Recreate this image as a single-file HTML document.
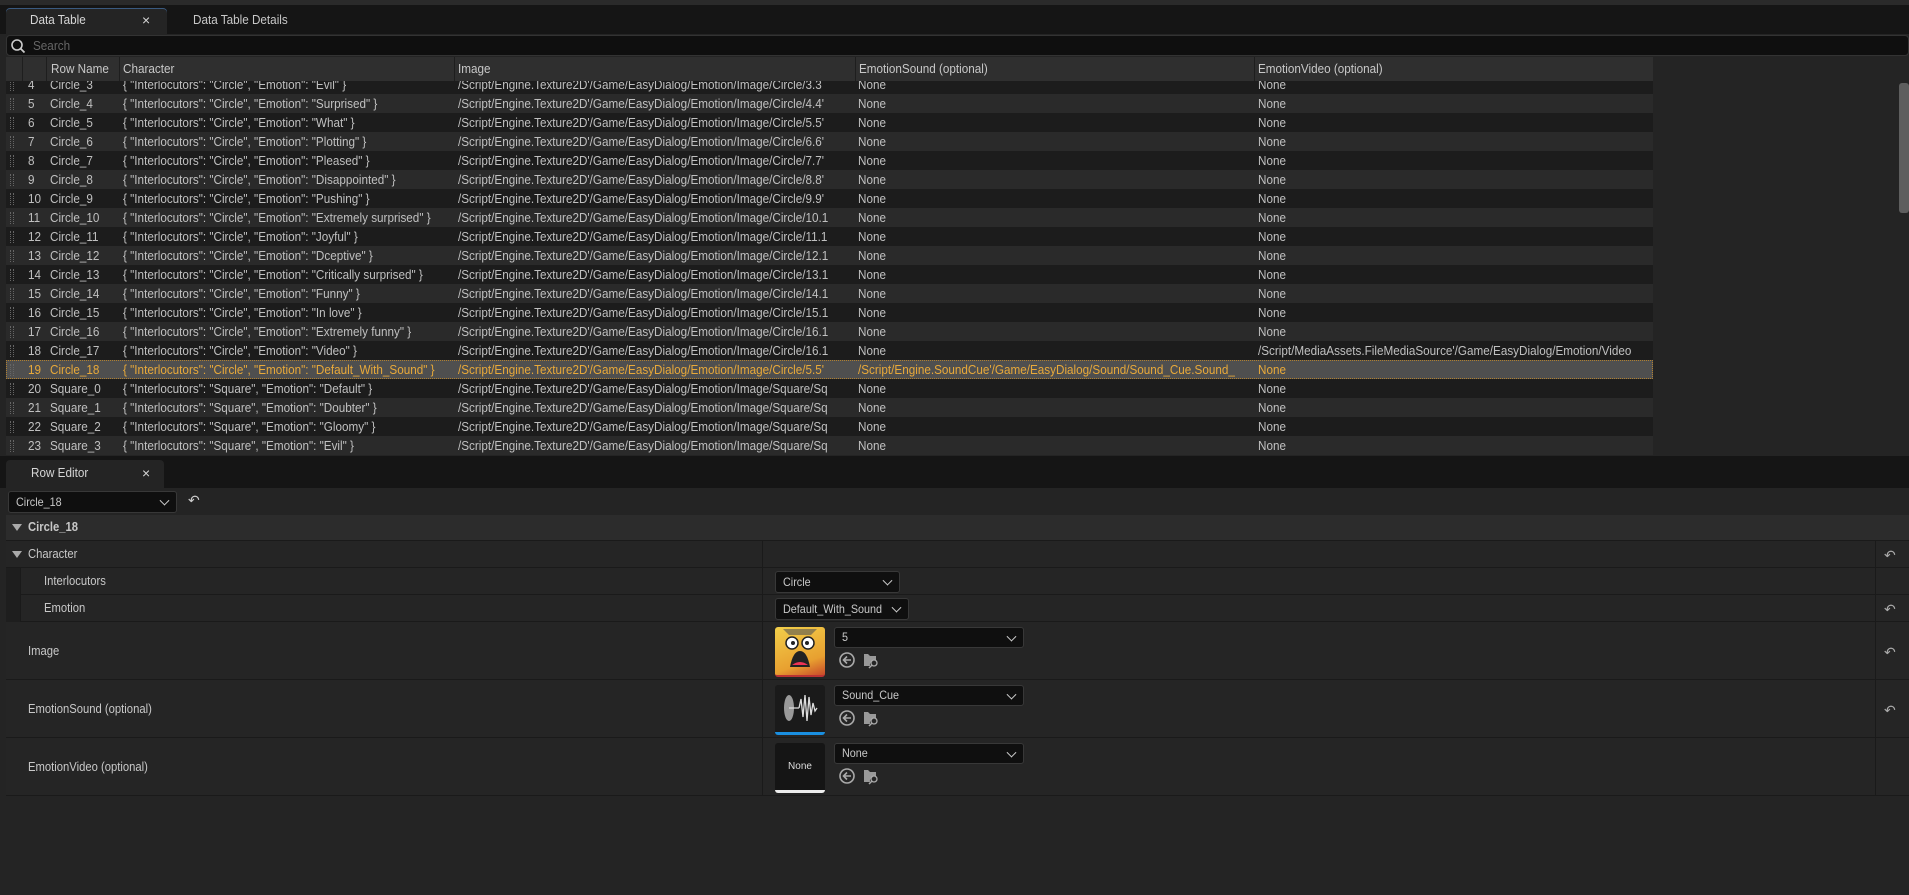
<!DOCTYPE html>
<html><head><meta charset="utf-8"><style>
*{box-sizing:border-box;margin:0;padding:0}
body{width:1909px;height:895px;overflow:hidden;background:#242424;font-family:"Liberation Sans",sans-serif;font-size:13px;color:#c0c0c0;position:relative}
.abs{position:absolute}
.n{display:inline-block;transform:scaleX(.9);transform-origin:0 0;white-space:nowrap}
.tabbar{left:0;top:5px;width:1909px;height:29px;background:#151515}
.tab{top:8px;height:26px;background:#242424;border-radius:4px 4px 0 0;color:#d6d6d6;font-size:13px;line-height:24px}
.search{left:6px;top:35px;width:1903px;height:21px;background:#0f0f0f;border:1px solid #333;border-radius:4px;color:#666;line-height:19px;padding-left:26px}
.hdr{left:6px;top:57px;height:24px;background:#2f2f2f;width:1647px}
.hdr div{position:absolute;top:0;height:24px;line-height:24px;border-left:1px solid #1e1e1e;padding-left:3px;color:#c8c8c8}
.body{left:6px;top:81px;width:1647px;height:375px;overflow:hidden}
.row{position:absolute;left:0;width:1647px;height:19px;line-height:19px;white-space:nowrap}
.row.o{background:#2a2a2a}.row.e{background:#1c1c1c}
.row.sel{background:#4f4f4f;color:#e8a93a;outline:1px dotted #b08030;outline-offset:-1px}
.row span{position:absolute;top:0;overflow:hidden;height:19px;transform:scaleX(.9);transform-origin:0 0}
.row span.grip{transform:none}
.grip{left:4px;top:4px!important;width:4px;height:12px!important;border-left:1px dotted #666;border-right:1px dotted #666}
.lbl{color:#c8c8c8;font-size:12.5px}
.pr{position:absolute;left:6px;width:1903px;border-bottom:1px solid #1a1a1a}
.combo{position:absolute;background:#0f0f0f;border:1px solid #383838;border-radius:3px;color:#c8c8c8;font-size:12px;padding-left:7px;white-space:nowrap}
.chev{position:absolute;right:8px;top:50%;width:7px;height:7px;border-right:1.5px solid #ccc;border-bottom:1.5px solid #ccc;transform:translateY(-70%) rotate(45deg)}
.reset{position:absolute;left:1884px;color:#aaa;font-size:14px}
.thumb{position:absolute;left:775px;width:50px;height:50px;border-radius:3px}
</style></head><body>
<div class="abs" style="left:0;top:0;width:1909px;height:5px;background:#2a2a2a"></div>
<div class="abs tabbar"></div>
<div class="abs tab" style="left:6px;width:161px;box-shadow:inset 0 1px 0 #3a5a80"><span class="n" style="position:absolute;left:24px">Data Table</span><span style="position:absolute;left:136px;font-size:14px">×</span></div>
<div class="abs" style="left:193px;top:8px;line-height:24px;color:#c8c8c8"><span class="n">Data Table Details</span></div>
<div class="abs search"><span class="n">Search</span></div>
<svg class="abs" style="left:10px;top:38px" width="16" height="16"><circle cx="7" cy="7" r="5" fill="none" stroke="#ccc" stroke-width="1.6"/><line x1="10.5" y1="10.5" x2="14.5" y2="14.5" stroke="#ccc" stroke-width="1.8"/></svg>
<div class="abs hdr">
<div style="left:16px;width:24px"></div>
<div style="left:40px;width:73px;padding-left:4px"><span class="n">Row Name</span></div>
<div style="left:113px;width:335px"><span class="n">Character</span></div>
<div style="left:448px;width:401px"><span class="n">Image</span></div>
<div style="left:849px;width:399px"><span class="n">EmotionSound (optional)</span></div>
<div style="left:1248px;width:399px"><span class="n">EmotionVideo (optional)</span></div>
</div>
<div class="abs body" id="tb"></div>
<div class="abs" style="left:1899px;top:83px;width:10px;height:130px;background:#5e5e5e;border-radius:3px"></div>
<div class="abs" style="left:0;top:456px;width:1909px;height:32px;background:#151515"></div>
<div class="abs tab" style="left:6px;top:460px;width:158px;height:28px;line-height:26px"><span class="n" style="position:absolute;left:25px">Row Editor</span><span style="position:absolute;left:136px;font-size:14px">×</span></div>
<div class="abs" style="left:0;top:488px;width:1909px;height:407px;background:#242424"></div>
<div class="combo" style="left:8px;top:491px;width:169px;height:22px;line-height:20px"><span class="n">Circle_18</span><div class="chev"></div></div>
<div class="abs" style="left:188px;top:492px;color:#ccc;font-size:14px">↶</div>
<div class="pr" style="top:515px;height:26px;background:#2c2c2c"></div>
<div class="abs" style="left:12px;top:524px;width:0;height:0;border-left:5px solid transparent;border-right:5px solid transparent;border-top:7px solid #aaa"></div>
<div class="abs lbl" style="left:28px;top:520px;font-weight:bold"><span class="n">Circle_18</span></div>
<div class="pr" style="top:541px;height:27px;background:#252525"></div>
<div class="abs" style="left:12px;top:551px;width:0;height:0;border-left:5px solid transparent;border-right:5px solid transparent;border-top:7px solid #aaa"></div>
<div class="abs lbl" style="left:28px;top:547px"><span class="n">Character</span></div>
<div class="pr" style="top:568px;height:27px;background:#252525"></div>
<div class="pr" style="top:595px;height:27px;background:#252525"></div>
<div class="abs" style="left:6px;top:568px;width:15px;height:54px;background:#1e1e1e;border-right:1px solid #1a1a1a"></div>
<div class="abs lbl" style="left:44px;top:574px"><span class="n">Interlocutors</span></div>
<div class="abs lbl" style="left:44px;top:601px"><span class="n">Emotion</span></div>
<div class="pr" style="top:622px;height:58px;background:#252525"></div>
<div class="pr" style="top:680px;height:58px;background:#252525"></div>
<div class="pr" style="top:738px;height:58px;background:#252525"></div>
<div class="abs lbl" style="left:28px;top:644px"><span class="n">Image</span></div>
<div class="abs lbl" style="left:28px;top:702px"><span class="n">EmotionSound (optional)</span></div>
<div class="abs lbl" style="left:28px;top:760px"><span class="n">EmotionVideo (optional)</span></div>
<div class="abs" style="left:762px;top:541px;width:1px;height:255px;background:#1a1a1a"></div>
<div class="abs" style="left:1875px;top:541px;width:1px;height:255px;background:#1a1a1a"></div>
<div class="reset" style="top:547px">↶</div>
<div class="reset" style="top:601px">↶</div>
<div class="reset" style="top:644px">↶</div>
<div class="reset" style="top:702px">↶</div>
<div class="combo" style="left:775px;top:571px;width:125px;height:22px;line-height:20px"><span class="n">Circle</span><div class="chev"></div></div>
<div class="combo" style="left:775px;top:598px;width:134px;height:22px;line-height:20px"><span class="n">Default_With_Sound</span><div class="chev" style="right:8px"></div></div>
<div class="thumb" style="top:627px;background:linear-gradient(160deg,#f2cf4a,#e8a030 70%,#c84a2a);border-bottom:2px solid #b33">
<svg width="50" height="50"><path d="M8 2 L14 8 L36 8 L42 2" fill="#555" opacity=".6"/><circle cx="17" cy="16" r="6" fill="#fff" stroke="#222" stroke-width="1.5"/><circle cx="33" cy="16" r="6" fill="#fff" stroke="#222" stroke-width="1.5"/><circle cx="18" cy="16" r="2" fill="#222"/><circle cx="32" cy="16" r="2" fill="#222"/><path d="M15 40 Q18 24 25 24 Q32 24 35 40 Z" fill="#222"/><path d="M17 38 Q25 32 33 38 Z" fill="#e35"/></svg></div>
<div class="combo" style="left:834px;top:627px;width:190px;height:21px;line-height:19px"><span class="n">5</span><div class="chev"></div></div>
<div class="thumb" style="top:685px;background:#1a1a1a;border-bottom:3px solid #1a8fe0">
<svg width="50" height="46"><ellipse cx="14" cy="23" rx="5" ry="13" fill="#999"/><path d="M14 23 H24 M24 23 L26 14 L28 32 L30 10 L32 36 L34 12 L36 30 L38 18 L40 26 L42 23" stroke="#ddd" stroke-width="1.3" fill="none"/></svg></div>
<div class="combo" style="left:834px;top:685px;width:190px;height:21px;line-height:19px"><span class="n">Sound_Cue</span><div class="chev"></div></div>
<div class="thumb" style="top:743px;background:#151515;border-bottom:3px solid #eee;color:#ddd;font-size:10px;text-align:center;line-height:48px">None</div>
<div class="combo" style="left:834px;top:743px;width:190px;height:21px;line-height:19px"><span class="n">None</span><div class="chev"></div></div>
<div id="icons"></div>
<script>
var rows=[[4,"Circle_3","Evil","Circle/3.3"],[5,"Circle_4","Surprised","Circle/4.4'"],[6,"Circle_5","What","Circle/5.5'"],[7,"Circle_6","Plotting","Circle/6.6'"],[8,"Circle_7","Pleased","Circle/7.7'"],[9,"Circle_8","Disappointed","Circle/8.8'"],[10,"Circle_9","Pushing","Circle/9.9'"],[11,"Circle_10","Extremely surprised","Circle/10.1"],[12,"Circle_11","Joyful","Circle/11.1"],[13,"Circle_12","Dceptive","Circle/12.1"],[14,"Circle_13","Critically surprised","Circle/13.1"],[15,"Circle_14","Funny","Circle/14.1"],[16,"Circle_15","In love","Circle/15.1"],[17,"Circle_16","Extremely funny","Circle/16.1"],[18,"Circle_17","Video","Circle/16.1"],[19,"Circle_18","Default_With_Sound","Circle/5.5'"],[20,"Square_0","Default","Square/Sq"],[21,"Square_1","Doubter","Square/Sq"],[22,"Square_2","Gloomy","Square/Sq"],[23,"Square_3","Evil","Square/Sq"]];
var h="";
function w(x){return Math.round(x/0.9);}
rows.forEach(function(r,i){var n=r[0],top=-6+i*19;var who=r[1].indexOf("Square")==0?"Square":"Circle";
var cls=n==19?"sel":(n%2?"o":"e");
var snd=n==19?"/Script/Engine.SoundCue'/Game/EasyDialog/Sound/Sound_Cue.Sound_":"None";
var vid=n==18?"/Script/MediaAssets.FileMediaSource'/Game/EasyDialog/Emotion/Video":"None";
h+='<div class="row '+cls+'" style="top:'+top+'px"><span class="grip"></span><span style="left:22px">'+n+'</span><span style="left:44px;width:'+w(70)+'px">'+r[1]+'</span><span style="left:117px;width:'+w(330)+'px">{ "Interlocutors": "'+who+'", "Emotion": "'+r[2]+'" }</span><span style="left:452px;width:'+w(395)+'px">/Script/Engine.Texture2D\'/Game/EasyDialog/Emotion/Image/'+r[3]+'</span><span style="left:852px;width:'+w(394)+'px">'+snd+'</span><span style="left:1252px;width:'+w(393)+'px">'+vid+'</span></div>';});
document.getElementById("tb").innerHTML=h;
var ic="";[651,709,767].forEach(function(t){ic+='<svg class="abs" style="left:838px;top:'+t+'px" width="50" height="18"><circle cx="9" cy="9" r="7" fill="none" stroke="#aaa" stroke-width="1.6"/><path d="M13 9 H6 M9 5.5 L5.5 9 L9 12.5" stroke="#aaa" stroke-width="1.6" fill="none"/><path d="M26 3 H30 L32 5 H38 V9 A5 5 0 0 0 32 15 H26 Z" fill="#999"/><circle cx="36" cy="12" r="3" fill="none" stroke="#aaa" stroke-width="1.3"/><line x1="34" y1="14" x2="31" y2="17" stroke="#aaa" stroke-width="1.5"/></svg>';});
document.getElementById("icons").innerHTML=ic;
</script>
</body></html>
